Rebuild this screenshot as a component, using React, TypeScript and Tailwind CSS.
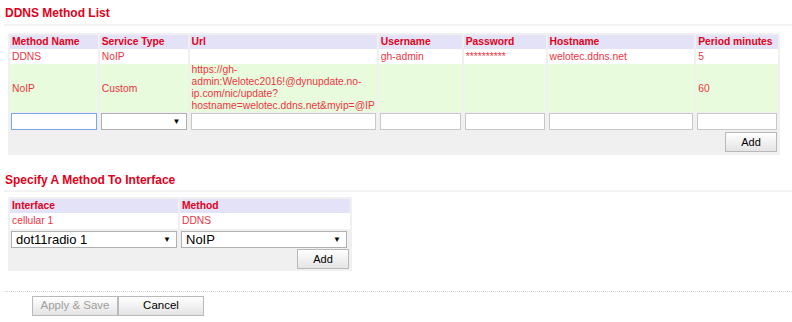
import React, { useState } from 'react';

const methods = [
  { name: 'DDNS', type: 'NoIP', url: [] as string[], user: 'gh-admin', pass: '**********', host: 'welotec.ddns.net', period: '5' },
  {
    name: 'NoIP',
    type: 'Custom',
    url: ['https://gh-', 'admin:Welotec2016!@dynupdate.no-', 'ip.com/nic/update?', 'hostname=welotec.ddns.net&myip=@IP'],
    user: '',
    pass: '',
    host: '',
    period: '60',
  },
];

const cols = [
  { label: 'Method Name', w: 'w-[88px]' },
  { label: 'Service Type', w: 'w-[88px]' },
  { label: 'Url', w: 'w-[186px]' },
  { label: 'Username', w: 'w-[83px]' },
  { label: 'Password', w: 'w-[82px]' },
  { label: 'Hostname', w: 'w-[147px]' },
  { label: 'Period minutes', w: 'w-[82px]' },
];

const th = 'h-[14px] bg-[#e4e2f6] px-[2px] text-left align-middle font-bold text-[#e2001a] leading-[14px]';
const td = 'px-[2px] align-middle text-[#ee3444]';

function Button({ children, disabled, className = '' }: { children: React.ReactNode; disabled?: boolean; className?: string }) {
  return (
    <button
      type="button"
      className={`h-[20px] border border-[#b9b9b9] bg-linear-to-b from-white to-[#e4e4e4] ${disabled ? 'text-[#a0a0a0]' : 'text-black'} ${className}`}
    >
      {children}
    </button>
  );
}

function FakeSelect({ value, className = '' }: { value: string; className?: string }) {
  return (
    <div className={`relative h-[17px] border border-[#b0b0b0] bg-white ${className}`}>
      <select className="h-full w-full appearance-none bg-transparent pl-[4px] text-[13px] leading-[15px] text-black outline-none">
        <option>{value}</option>
      </select>
      <span className="pointer-events-none absolute right-[5px] top-[2px] text-[8px] text-black">▼</span>
    </div>
  );
}

export default function App() {
  const [focused] = useState(0);

  return (
    <div className="h-[322px] w-[792px] overflow-hidden bg-white font-['Liberation_Sans',Arial,sans-serif] text-[10.3px]">
      <div className="pt-[6px]">
        <h2 className="h-[14px] pl-[5px] text-[12px] font-bold leading-[14px] text-[#e2001a]">DDNS Method List</h2>
        <div className="ml-[4px] mt-[4px] h-[2px] bg-[#f3f3f3]" />

        <div className="ml-[8px] mt-[7px] w-[772px] bg-[#f0f0f0] pt-[2px] pb-[3px]">
          <table className="table-fixed border-separate border-spacing-x-[2px] border-spacing-y-0">
            <thead>
              <tr>
                {cols.map((c) => (
                  <th key={c.label} className={`${th} ${c.w}`}>
                    {c.label}
                  </th>
                ))}
              </tr>
            </thead>
            <tbody>
              {methods.map((m, i) => (
                <tr key={m.name} className={i % 2 === 0 ? 'bg-white' : 'bg-[#e8fcdd]'}>
                  <td className={`${td} h-[14px]`}>{m.name}</td>
                  <td className={td}>{m.type}</td>
                  <td className={`${td} leading-[12px]`}>
                    {m.url.map((l) => (
                      <div key={l}>{l}</div>
                    ))}
                  </td>
                  <td className={td}>{m.user}</td>
                  <td className={td}>{m.pass}</td>
                  <td className={td}>{m.host}</td>
                  <td className={td}>{m.period}</td>
                </tr>
              ))}
              <tr>
                {cols.map((c, i) => (
                  <td key={c.label} className="h-[19px] px-[1px] align-middle">
                    {i === 1 ? (
                      <FakeSelect value="" />
                    ) : (
                      <input
                        className={`block h-[17px] w-full border bg-white px-1 text-[11px] outline-none ${
                          i === focused ? 'border-[#7ba6e6]' : 'border-[#c8c8c8]'
                        }`}
                      />
                    )}
                  </td>
                ))}
              </tr>
            </tbody>
          </table>
          <div className="mt-[1px] flex justify-end pr-[3px]">
            <Button className="w-[52px] text-[11px]">Add</Button>
          </div>
        </div>

        <h2 className="mt-[18px] h-[14px] pl-[5px] text-[12px] font-bold leading-[14px] text-[#e2001a]">
          Specify A Method To Interface
        </h2>
        <div className="ml-[4px] mt-[3px] h-[2px] bg-[#f3f3f3]" />

        <div className="ml-[8px] mt-[5px] w-[344px] bg-[#f0f0f0] pt-[2px] pb-[2px]">
          <table className="table-fixed border-separate border-spacing-x-[2px] border-spacing-y-0">
            <thead>
              <tr>
                <th className={`${th} w-[168px]`}>Interface</th>
                <th className={`${th} w-[170px]`}>Method</th>
              </tr>
            </thead>
            <tbody>
              <tr className="bg-white">
                <td className={`${td} h-[14px]`}>cellular 1</td>
                <td className={td}>DDNS</td>
              </tr>
              <tr>
                <td className="h-[20px] px-[1px] pt-[2px] align-top">
                  <FakeSelect value="dot11radio 1" className="w-[166px]" />
                </td>
                <td className="px-[1px] pt-[2px] align-top">
                  <FakeSelect value="NoIP" className="w-[166px]" />
                </td>
              </tr>
            </tbody>
          </table>
          <div className="flex justify-end pr-[3px]">
            <Button className="w-[52px] text-[11px]">Add</Button>
          </div>
        </div>

        <div className="ml-[5px] mt-[20px] border-t border-dotted border-[#cfcfcf]" />
        <div className="ml-[32px] mt-[4px] flex">
          <Button disabled className="w-[86px] text-[11.5px]">
            Apply &amp; Save
          </Button>
          <Button className="w-[86px] text-[11.5px]">Cancel</Button>
        </div>
      </div>
    </div>
  );
}
